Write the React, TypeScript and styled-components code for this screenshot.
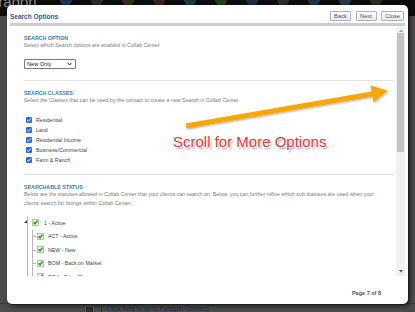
import React from 'react';
import styled, { createGlobalStyle } from 'styled-components';

const GlobalStyle = createGlobalStyle`
  html, body {
    margin: 0;
    padding: 0;
  }
  body {
    width: 415px;
    height: 312px;
    overflow: hidden;
    background: #4d4d4d;
    font-family: "Liberation Sans", Arial, sans-serif;
  }
`;

const Screen = styled.div`
  position: relative;
  width: 415px;
  height: 312px;
  overflow: hidden;
  display: flex;
  flex-direction: column;
  background: #4b4b4b;
`;

const TopNav = styled.div`
  height: 16px;
  background: #0d0d0d;
  display: flex;
  align-items: flex-start;
  overflow: hidden;
`;

const Logo = styled.span`
  margin-left: -20px;
  margin-top: -7px;
  font-size: 15px;
  color: #8a8a8a;
  width: 80px;
`;

const NavIcon = styled.span<{ $color: string }>`
  width: 12px;
  height: 12px;
  margin-top: -6px;
  margin-right: 19px;
  border-radius: 50%;
  background: ${p => p.$color};
`;

const BottomLink = styled.div`
  margin-top: auto;
  height: 8px;
  padding-left: 85px;
  display: flex;
  align-items: flex-start;
  gap: 7px;
  border-top: 1px solid #3c3c3c;
`;

const LinkIcon = styled.span`
  width: 7px;
  height: 7px;
  margin-top: 2px;
  background: #2e2e2e;
  border: 1px solid #5a5a5a;
`;

const LinkText = styled.span`
  font-size: 6.3px;
  line-height: 9px;
  color: #1b2a4e;
  padding-left: 5px;
  border-left: 1px solid #333;
`;

const Modal = styled.div`
  position: absolute;
  left: 7px;
  top: 5px;
  width: 401px;
  height: 299px;
  box-sizing: border-box;
  padding: 0 3px;
  background: #fff;
  border-radius: 5px;
  box-shadow: 1px 1px 0 #1e1e1e, 2px 2px 4px rgba(0, 0, 0, 0.6);
  display: flex;
  flex-direction: column;
`;

const Header = styled.div`
  height: 14px;
  padding: 4px 1px 0 0;
  display: flex;
  align-items: center;
  justify-content: space-between;
  border-bottom: 3px solid #cdcdcd;
`;

const Title = styled.h1`
  margin: 0;
  font-size: 6.5px;
  font-weight: 700;
  color: #2b5a96;
`;

const ButtonGroup = styled.div`
  display: flex;
  gap: 4.5px;
`;

const NavButton = styled.button<{ $w: number }>`
  width: ${p => p.$w}px;
  height: 10px;
  padding: 0;
  font-family: inherit;
  font-size: 5.8px;
  line-height: 8px;
  color: #3f536e;
  background: linear-gradient(#ffffff, #ebebeb);
  border: 1px solid #a7b3c1;
  border-radius: 1px;
`;

const Body = styled.div`
  margin-top: 1px;
  height: 249px;
  display: flex;
`;

const Content = styled.div`
  flex: 1;
  overflow: hidden;
  padding: 7.5px 0 0 14px;
`;

const SectionTitle = styled.div<{ $gap: number }>`
  margin-top: ${p => p.$gap}px;
  font-size: 5.3px;
  font-weight: 700;
  line-height: 7px;
  color: #3a78b8;
`;

const Desc = styled.div`
  margin-top: -1px;
  max-width: 366px;
  font-size: 5.3px;
  line-height: 9px;
  color: #7a7a7a;
`;

const SelectWrap = styled.label`
  margin-top: 9.5px;
  width: 52px;
  height: 10px;
  box-sizing: border-box;
  display: flex;
  align-items: center;
  border: 1px solid #7a7a7a;
  border-radius: 1px;
  padding: 0 3px 0 2px;
`;

const Select = styled.select`
  appearance: none;
  flex: 1;
  border: none;
  background: none;
  padding: 0;
  font-family: inherit;
  font-size: 5.6px;
  color: #222;
  outline: none;
`;

const Divider = styled.div<{ $gap: number }>`
  margin-top: ${p => p.$gap}px;
  margin-right: 2px;
  height: 1px;
  background: #e3e3e3;
`;

const CheckList = styled.div`
  margin-top: 10.5px;
  display: flex;
  flex-direction: column;
`;

const CheckRow = styled.div`
  height: 10px;
  display: flex;
  align-items: center;
  gap: 4px;
  padding-left: 2px;
  font-size: 5.3px;
  color: #444;
`;

const Tree = styled.div`
  margin-top: 8.7px;
  margin-left: 3px;
  padding-top: 2px;
  border-left: 1px solid #b8b8b8;
`;

const RootRow = styled.div`
  position: relative;
  height: 13.5px;
  margin-top: -2px;
  padding-left: 4px;
  display: flex;
  align-items: center;
  gap: 5px;
  font-size: 5.3px;
  color: #444;

  &::before {
    content: '';
    position: absolute;
    left: -4px;
    top: 4px;
    width: 0;
    height: 0;
    border-left: 3px solid transparent;
    border-bottom: 3px solid #3a3a3a;
  }
`;

const ChildList = styled.div`
  margin-left: 4px;
  border-left: 1px solid #b8b8b8;
`;

const ChildRow = styled.div`
  position: relative;
  height: 13.5px;
  padding-left: 4px;
  display: flex;
  align-items: center;
  gap: 4px;
  font-size: 5.3px;
  color: #444;

  &::before {
    content: '';
    position: absolute;
    left: 0;
    top: 6.5px;
    width: 3px;
    height: 1px;
    background: #b8b8b8;
  }
`;

const Scrollbar = styled.div`
  width: 9px;
  display: flex;
  flex-direction: column;
  align-items: center;
  background: #f0f0f0;
`;

const ScrollArrow = styled.div<{ $h: number }>`
  height: ${p => p.$h}px;
  display: flex;
  align-items: center;
  justify-content: center;
`;

const Thumb = styled.div`
  width: 7px;
  height: 119px;
  background: #c3c3c3;
`;

const Track = styled.div`
  flex: 1;
`;

const Footer = styled.div`
  flex: 1;
  padding: 6px 24px 0 0;
  display: flex;
  align-items: center;
  justify-content: flex-end;
  font-size: 5.5px;
  font-weight: 700;
  color: #555;
`;

const Callout = styled.svg`
  position: absolute;
  left: 0;
  top: 0;
  pointer-events: none;
`;

const CalloutText = styled.div`
  position: absolute;
  left: 173px;
  top: 134px;
  font-size: 15px;
  line-height: 15px;
  color: #ec3438;
  white-space: nowrap;
  text-shadow: -1px -1px 0 #fff, 1px -1px 0 #fff, -1px 1px 0 #fff, 1px 1px 0 #fff,
    1.5px 1.5px 2px rgba(0, 0, 0, 0.45);
`;

const BlueCheck = () => (
  <svg width="6" height="6" viewBox="0 0 6 6">
    <rect x="0" y="0" width="6" height="6" rx="1" fill="#2a6fd8" />
    <path d="M1.2 3.1 L2.5 4.3 L4.8 1.6" stroke="#fff" strokeWidth="0.9" fill="none" />
  </svg>
);

const TreeCheck = () => (
  <svg width="7" height="7" viewBox="0 0 7 7">
    <rect x="0.5" y="0.5" width="6" height="6" fill="#e3f2da" stroke="#9cc28c" strokeWidth="0.8" />
    <path d="M1.6 3.2 L3 4.8 L5.6 1.6" stroke="#2e9a2e" strokeWidth="1.4" fill="none" />
  </svg>
);

const navColors = ['#1d3350', '#2a2a2a', '#3a2c1c', '#3b2222', '#1f3942', '#213c1f', '#1f2d3d', '#2b2b2b', '#1e3248', '#25384a', '#2c2c20'];

const classes = ['Residential', 'Land', 'Residential Income', 'Business/Commercial', 'Farm & Ranch'];

const statuses = ['ACT - Active', 'NEW - New', 'BOM - Back on Market', 'PCH - Price Change'];

export default function App() {
  return (
    <>
      <GlobalStyle />
      <Screen>
        <TopNav>
          <Logo>Paragon</Logo>
          {navColors.map((c, i) => (
            <NavIcon key={i} $color={c} />
          ))}
        </TopNav>

        <BottomLink>
          <LinkIcon />
          <LinkText>Click here to go to Paragon Connect.</LinkText>
        </BottomLink>

        <Modal>
          <Header>
            <Title>Search Options</Title>
            <ButtonGroup>
              <NavButton $w={21}>Back</NavButton>
              <NavButton $w={21}>Next</NavButton>
              <NavButton $w={23}>Close</NavButton>
            </ButtonGroup>
          </Header>

          <Body>
            <Content>
              <SectionTitle $gap={0}>SEARCH OPTION</SectionTitle>
              <Desc>Select which Search options are enabled in Collab Center</Desc>
              <SelectWrap>
                <Select defaultValue="new">
                  <option value="new">New Only</option>
                  <option value="all">All</option>
                </Select>
                <svg width="5" height="4" viewBox="0 0 5 4">
                  <path d="M0.6 0.8 L2.5 3 L4.4 0.8" stroke="#222" strokeWidth="1" fill="none" />
                </svg>
              </SelectWrap>

              <Divider $gap={11} />

              <SectionTitle $gap={8.5}>SEARCH CLASSES</SectionTitle>
              <Desc>Select the Classes that can be used by the contact to create a new Search in Collab Center.</Desc>
              <CheckList>
                {classes.map(c => (
                  <CheckRow key={c}>
                    <BlueCheck />
                    {c}
                  </CheckRow>
                ))}
              </CheckList>

              <Divider $gap={9} />

              <SectionTitle $gap={8.5}>SEARCHABLE STATUS</SectionTitle>
              <Desc>
                Below are the statuses allowed in Collab Center that your clients can search on. Below, you can further
                refine which sub statuses are used when your clients search for listings within Collab Center.
              </Desc>

              <Tree>
                <RootRow>
                  <TreeCheck />1 - Active
                </RootRow>
                <ChildList>
                  {statuses.map(s => (
                    <ChildRow key={s}>
                      <TreeCheck />
                      {s}
                    </ChildRow>
                  ))}
                </ChildList>
              </Tree>
            </Content>

            <Scrollbar>
              <ScrollArrow $h={6}>
                <svg width="4" height="3" viewBox="0 0 4 3">
                  <path d="M0 3 L2 0.5 L4 3 Z" fill="#a0a0a0" />
                </svg>
              </ScrollArrow>
              <Thumb />
              <Track />
              <ScrollArrow $h={9}>
                <svg width="4" height="3" viewBox="0 0 4 3">
                  <path d="M0 0 L2 2.5 L4 0 Z" fill="#505050" />
                </svg>
              </ScrollArrow>
            </Scrollbar>
          </Body>

          <Footer>Page 7 of 8</Footer>
        </Modal>

        <Callout width="415" height="312" viewBox="0 0 415 312">
          <defs>
            <filter id="arrowShadow" x="-10%" y="-50%" width="120%" height="200%">
              <feDropShadow dx="0.8" dy="1" stdDeviation="0.8" floodColor="#000" floodOpacity="0.35" />
            </filter>
          </defs>
          <polygon
            points="185.6,123.5 371.6,91.5 370.6,85.6 387.5,90.5 373.6,102.2 372.4,96.5 186.4,128.5"
            fill="#f6a800"
            filter="url(#arrowShadow)"
          />
        </Callout>
        <CalloutText>Scroll for More Options</CalloutText>
      </Screen>
    </>
  );
}
